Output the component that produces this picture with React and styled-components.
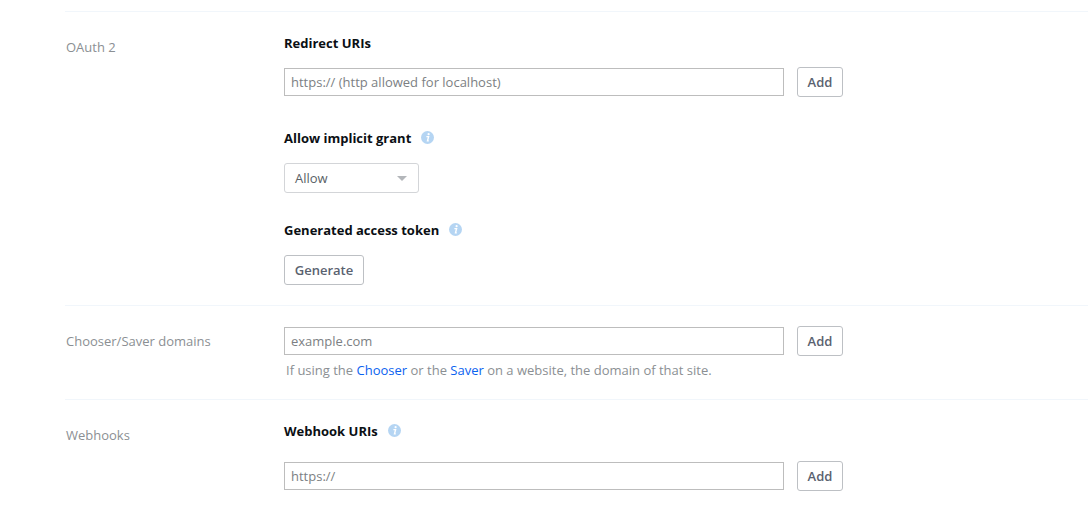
import React from "react"
import styled, { createGlobalStyle } from "styled-components"

const GlobalStyle = createGlobalStyle`
  html, body {
    margin: 0;
    padding: 0;
    background: #fff;
    overflow: hidden;
  }
  body {
    font-family: "Open Sans", "Liberation Sans", sans-serif;
    font-size: 13px;
    color: #3d464d;
  }
`

const Page = styled.div`
  height: 509px;
  padding: 11px 0 0 65px;
  box-sizing: border-box;
  overflow: hidden;
`

const Section = styled.section`
  display: flex;
  border-top: 1px solid #f1f6fb;
  padding-top: ${({ $top }) => $top}px;
  height: ${({ $height }) => $height}px;
  box-sizing: border-box;
`

const SectionLabel = styled.div`
  flex: 0 0 219px;
  box-sizing: border-box;
  color: #8b8f93;
  font-size: 13px;
  line-height: 18px;
  padding-left: 1px;
  padding-top: ${({ $top }) => $top || 0}px;
`

const SectionBody = styled.div`
  display: flex;
  flex-direction: column;
  align-items: flex-start;
`

const Heading = styled.h3`
  display: flex;
  align-items: center;
  margin: 0 0 ${({ $gap }) => $gap}px;
  height: 18px;
  font-size: 13px;
  line-height: 18px;
  font-weight: 700;
  color: #0b0f14;
`

const InfoBadge = styled.svg`
  width: 13px;
  height: 13px;
  margin-left: 10px;
  position: relative;
  top: -1px;
`

const InputRow = styled.div`
  display: flex;
  align-items: center;
  gap: 13px;
  margin-bottom: ${({ $gap }) => $gap || 0}px;
`

const TextInput = styled.input`
  width: 500px;
  height: 28px;
  box-sizing: border-box;
  border: 1px solid #bdbdbd;
  border-radius: 0;
  padding: 0 6px;
  font-family: inherit;
  font-size: 13px;
  color: #3d464d;
  outline: none;

  &::placeholder {
    color: #7c7f83;
    opacity: 1;
  }
`

const Button = styled.button`
  height: 30px;
  width: ${({ $width }) => $width}px;
  padding: 0;
  box-sizing: border-box;
  background: #fff;
  border: 1px solid #bdc0c4;
  border-radius: 3px;
  font-family: inherit;
  font-size: 13px;
  font-weight: 600;
  color: #5a6270;
`

const Select = styled.div`
  display: flex;
  align-items: center;
  justify-content: space-between;
  width: 135px;
  height: 30px;
  box-sizing: border-box;
  padding: 0 11px 0 10px;
  margin-bottom: 28px;
  border: 1px solid #d3d5d8;
  border-radius: 3px;
  color: #5a5f66;
  font-size: 13px;
`

const Caret = styled.span`
  width: 0;
  height: 0;
  border-left: 5px solid transparent;
  border-right: 5px solid transparent;
  border-top: 5px solid #b3b6ba;
`

const HelpText = styled.p`
  margin: 5px 0 0 2px;
  font-size: 13px;
  line-height: 18px;
  color: #8b8f93;
`

const HelpLink = styled.a`
  color: #0a62f0;
  text-decoration: none;
`

const Info = () => (
  <InfoBadge viewBox="0 0 13 13" aria-hidden="true">
    <circle cx="6.5" cy="6.5" r="6.5" fill="#b5d5f3" />
    <circle cx="7.6" cy="3.2" r="1.1" fill="#fff" />
    <path d="M5.4 5.6h2.2l-1.1 4.3h1.3" fill="none" stroke="#fff" strokeWidth="1.4" />
  </InfoBadge>
)

const App = () => (
  <>
    <GlobalStyle />
    <Page>
      <Section $top={22} $height={294}>
        <SectionLabel $top={4}>OAuth 2</SectionLabel>
        <SectionBody>
          <Heading $gap={15}>Redirect URIs</Heading>
          <InputRow $gap={32}>
            <TextInput placeholder="https:// (http allowed for localhost)" />
            <Button $width={46}>Add</Button>
          </InputRow>
          <Heading $gap={16}>
            Allow implicit grant
            <Info />
          </Heading>
          <Select>
            Allow
            <Caret />
          </Select>
          <Heading $gap={16}>
            Generated access token
            <Info />
          </Heading>
          <Button $width={80}>Generate</Button>
        </SectionBody>
      </Section>
      <Section $top={20} $height={94}>
        <SectionLabel $top={6}>Chooser/Saver domains</SectionLabel>
        <SectionBody>
          <InputRow>
            <TextInput placeholder="example.com" />
            <Button $width={46}>Add</Button>
          </InputRow>
          <HelpText>
            If using the <HelpLink href="#">Chooser</HelpLink> or the{" "}
            <HelpLink href="#">Saver</HelpLink> on a website, the domain of that site.
          </HelpText>
        </SectionBody>
      </Section>
      <Section $top={22} $height={110}>
        <SectionLabel $top={4}>Webhooks</SectionLabel>
        <SectionBody>
          <Heading $gap={21}>
            Webhook URIs
            <Info />
          </Heading>
          <InputRow>
            <TextInput placeholder="https://" />
            <Button $width={46}>Add</Button>
          </InputRow>
        </SectionBody>
      </Section>
    </Page>
  </>
)

export default App
